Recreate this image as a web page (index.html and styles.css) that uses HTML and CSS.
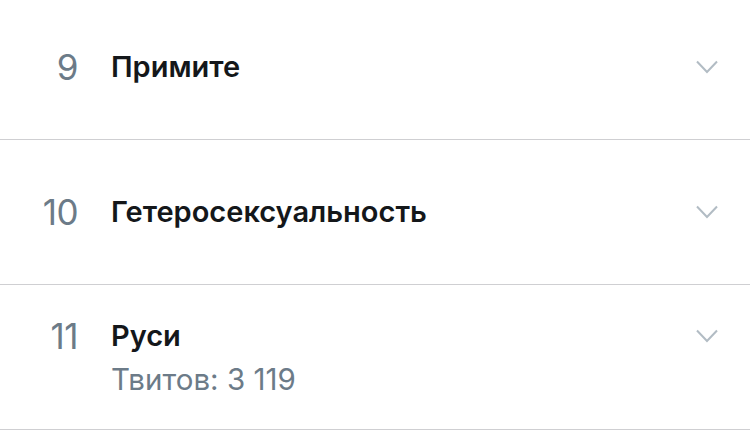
FILE: index.html
```html
<!DOCTYPE html>
<html lang="ru">
<head>
<meta charset="utf-8">
<link rel="stylesheet" href="styles.css">
</head>
<body>
<ul class="list">
  <li class="row">
    <span class="num">9</span>
    <div class="title">Примите</div>
    <svg class="chev" viewBox="0 0 22 14" width="22" height="14"><path d="M1 1.5 L11 12 L21 1.5" fill="none" stroke="#b2bcc4" stroke-width="2"/></svg>
  </li>
  <li class="row">
    <span class="num">10</span>
    <div class="title">Гетеросексуальность</div>
    <svg class="chev" viewBox="0 0 22 14" width="22" height="14"><path d="M1 1.5 L11 12 L21 1.5" fill="none" stroke="#b2bcc4" stroke-width="2"/></svg>
  </li>
  <li class="row">
    <span class="num">11</span>
    <div class="title">Руси</div>
    <svg class="chev" viewBox="0 0 22 14" width="22" height="14"><path d="M1 1.5 L11 12 L21 1.5" fill="none" stroke="#b2bcc4" stroke-width="2"/></svg>
    <div class="sub">Твитов: 3 119</div>
  </li>
</ul>
</body>
</html>
```
FILE: styles.css
```css
html, body {
  margin: 0;
  padding: 0;
  background: #ffffff;
  overflow: hidden;
}
body {
  font-family: "Inter", "Roboto", "Noto Sans", sans-serif;
}
.list {
  list-style: none;
  margin: -5px 0 0 0;
  padding: 0;
}
.row {
  height: 144px;
  border-bottom: 1px solid #cfcfd2;
  display: grid;
  grid-template-columns: 78px 1fr 22px;
  column-gap: 33px;
  row-gap: 3px;
  align-items: center;
  align-content: center;
  padding-right: 32px;
}
.num {
  text-align: right;
  font-size: 35px;
  font-weight: 400;
  color: #6c7b88;
  line-height: 40px;
  letter-spacing: -0.5px;
}
.title {
  font-size: 29px;
  font-weight: 600;
  color: #14171a;
  line-height: 40px;
}
.sub {
  grid-column: 2;
  font-size: 29.5px;
  font-weight: 400;
  color: #6c7b88;
  line-height: 40px;
}
.chev {
  display: block;
}
```
